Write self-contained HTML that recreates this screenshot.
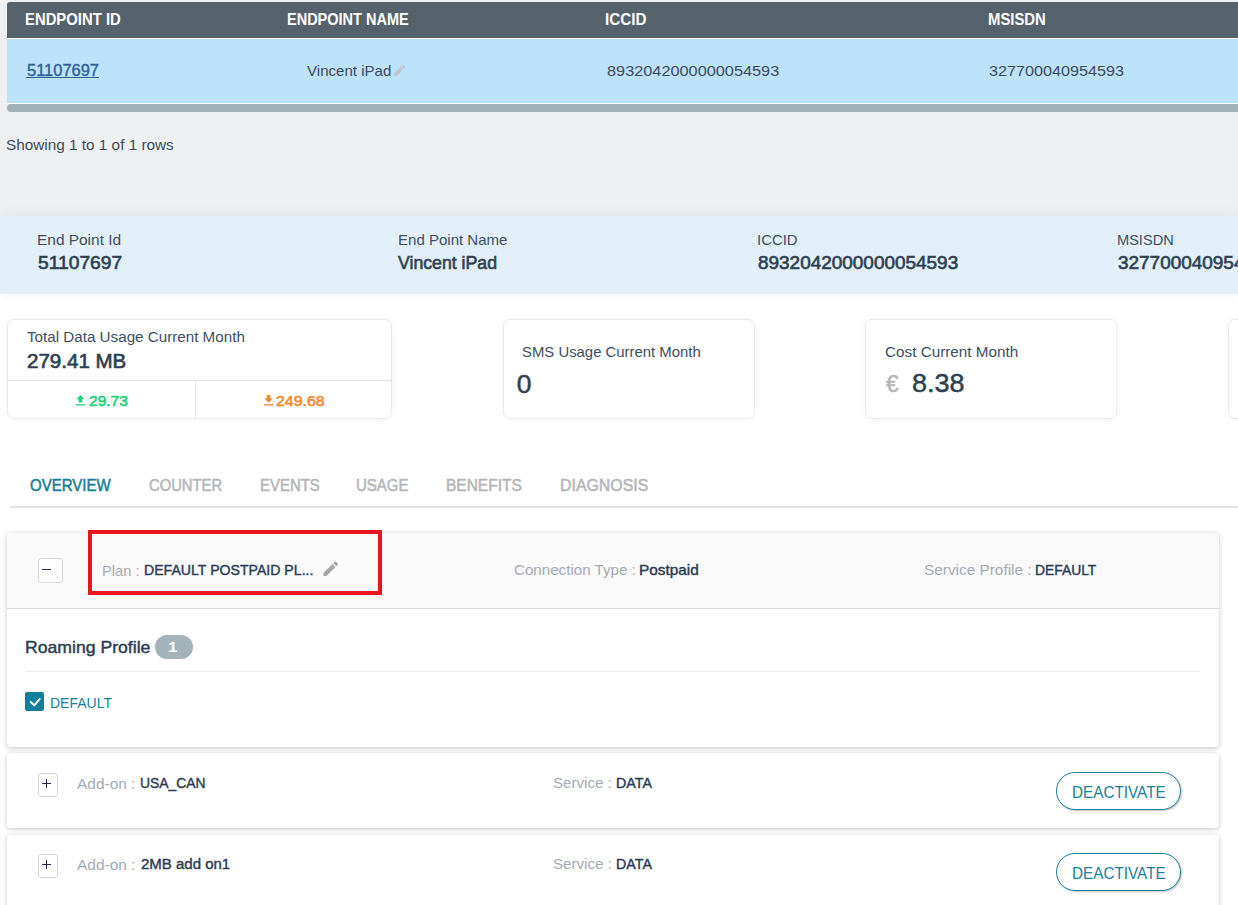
<!DOCTYPE html>
<html><head><meta charset="utf-8"><style>
html,body{margin:0;padding:0;width:1238px;height:905px;overflow:hidden;background:#fff;position:relative;font-family:"Liberation Sans", sans-serif;}
.t{position:absolute;line-height:1;white-space:nowrap;transform-origin:0 0;}
</style></head><body>
<div style="position:absolute;left:0px;top:0px;width:1238px;height:216px;background:#eff0f2"></div>
<div style="position:absolute;left:7px;top:2px;width:1231px;height:36px;background:#56626b;border-top-left-radius:3px"></div>
<div style="position:absolute;left:7px;top:38px;width:1231px;height:1px;background:#ffffff"></div>
<div style="position:absolute;left:7px;top:39px;width:1231px;height:64px;background:#bde3fb"></div>
<div style="position:absolute;left:7px;top:103px;width:1231px;height:1px;background:#ffffff"></div>
<div style="position:absolute;left:7px;top:104px;width:1231px;height:8px;background:#a2b1b8;border-radius:4px 0 0 4px"></div>
<div class="t" style="left:25.13px;top:11.00px;font-size:17px;font-weight:700;color:#ffffff;transform:scaleX(0.8741);">ENDPOINT ID</div>
<div class="t" style="left:287.15px;top:11.00px;font-size:17px;font-weight:700;color:#ffffff;transform:scaleX(0.8532);">ENDPOINT NAME</div>
<div class="t" style="left:605.30px;top:11.00px;font-size:17px;font-weight:700;color:#ffffff;transform:scaleX(0.8956);">ICCID</div>
<div class="t" style="left:987.73px;top:11.00px;font-size:17px;font-weight:700;color:#ffffff;transform:scaleX(0.8750);">MSISDN</div>
<div class="t" style="left:26.50px;top:63.00px;font-size:16px;font-weight:400;color:#2d5f96;transform:scaleX(1.0286);-webkit-text-stroke:0.35px #2d5f96">51107697</div>
<div style="position:absolute;left:26px;top:76.5px;width:73px;height:1.2px;background:#2d5f96"></div>
<div class="t" style="left:306.60px;top:64.00px;font-size:14.6px;font-weight:400;color:#3b4a5c;transform:scaleX(1.0333);">Vincent iPad</div>
<svg style="position:absolute;left:391.5px;top:62.5px" width="15" height="15" viewBox="0 0 24 24"><path fill="#bcc6ce" d="M3 17.25V21h3.75L17.81 9.94l-3.75-3.75L3 17.25zM20.71 7.04a1 1 0 0 0 0-1.41l-2.34-2.34a1 1 0 0 0-1.41 0l-1.83 1.83 3.75 3.75 1.83-1.83z"/></svg>
<div class="t" style="left:606.50px;top:63.00px;font-size:15px;font-weight:400;color:#3b4a5c;transform:scaleX(1.0867);">8932042000000054593</div>
<div class="t" style="left:988.60px;top:63.00px;font-size:15px;font-weight:400;color:#3b4a5c;transform:scaleX(1.0792);">327700040954593</div>
<div class="t" style="left:6.16px;top:138.00px;font-size:14.8px;font-weight:400;color:#3b4a5c;transform:scaleX(1.0354);">Showing 1 to 1 of 1 rows</div>
<div style="position:absolute;left:0px;top:216px;width:1238px;height:78px;background:#e3f0f9;box-shadow:0 0 14px rgba(0,0,0,0.06)"></div>
<div class="t" style="left:37.47px;top:232.00px;font-size:15px;font-weight:400;color:#3d4e62;transform:scaleX(1.0288);">End Point Id</div>
<div class="t" style="left:397.60px;top:232.00px;font-size:15px;font-weight:400;color:#3d4e62;transform:scaleX(1.0019);">End Point Name</div>
<div class="t" style="left:757.40px;top:232.00px;font-size:15px;font-weight:400;color:#3d4e62;transform:scaleX(0.9950);">ICCID</div>
<div class="t" style="left:1117.43px;top:232.00px;font-size:15px;font-weight:400;color:#3d4e62;transform:scaleX(0.9719);">MSISDN</div>
<div class="t" style="left:37.60px;top:255.00px;font-size:17.8px;font-weight:400;color:#2e3f52;transform:scaleX(1.0821);-webkit-text-stroke:0.6px #2e3f52">51107697</div>
<div class="t" style="left:397.80px;top:255.00px;font-size:17.8px;font-weight:400;color:#2e3f52;transform:scaleX(0.9949);-webkit-text-stroke:0.6px #2e3f52">Vincent iPad</div>
<div class="t" style="left:758.40px;top:255.00px;font-size:17.8px;font-weight:400;color:#2e3f52;transform:scaleX(1.0654);-webkit-text-stroke:0.6px #2e3f52">8932042000000054593</div>
<div class="t" style="left:1118.40px;top:255.00px;font-size:17.8px;font-weight:400;color:#2e3f52;transform:scaleX(1.0654);-webkit-text-stroke:0.6px #2e3f52">327700040954593</div>
<div style="position:absolute;left:7px;top:319px;width:385px;height:100px;background:#fff;border:1px solid #e8ecf0;border-radius:7px;box-sizing:border-box;box-shadow:0 0 10px rgba(0,0,0,0.045)"></div>
<div style="position:absolute;left:8px;top:380px;width:383px;height:1px;background:#e4e8ec"></div>
<div style="position:absolute;left:195px;top:381px;width:1px;height:37px;background:#e4e8ec"></div>
<div class="t" style="left:27.00px;top:330.00px;font-size:14px;font-weight:400;color:#3d4e62;transform:scaleX(1.0850);">Total Data Usage Current Month</div>
<div class="t" style="left:26.80px;top:351.00px;font-size:20px;font-weight:400;color:#2e3f52;transform:scaleX(1.0268);-webkit-text-stroke:0.65px #2e3f52">279.41 MB</div>
<svg style="position:absolute;left:76px;top:395px" width="9" height="11" viewBox="0 0 9 11"><path fill="#20d27a" d="M4.5 0L8.6 4.3H6.3V7.6H2.7V4.3H0.4z"/><rect x="0" y="9.2" width="9" height="1.3" fill="#20d27a"/></svg>
<div class="t" style="left:88.90px;top:393.00px;font-size:15px;font-weight:400;color:#20d27a;transform:scaleX(1.0342);-webkit-text-stroke:0.6px #20d27a">29.73</div>
<svg style="position:absolute;left:264px;top:395px" width="9" height="11" viewBox="0 0 9 11"><path fill="#f7892f" d="M2.7 0H6.3V3.6H8.6L4.5 7.8 0.4 3.6H2.7z"/><rect x="0" y="9.2" width="9" height="1.3" fill="#f7892f"/></svg>
<div class="t" style="left:276.00px;top:393.00px;font-size:15px;font-weight:400;color:#f7892f;transform:scaleX(1.0609);-webkit-text-stroke:0.6px #f7892f">249.68</div>
<div style="position:absolute;left:503px;top:319px;width:252px;height:100px;background:#fff;border:1px solid #e8ecf0;border-radius:7px;box-sizing:border-box;box-shadow:0 0 10px rgba(0,0,0,0.045)"></div>
<div class="t" style="left:521.81px;top:344.00px;font-size:15px;font-weight:400;color:#3d4e62;transform:scaleX(0.9922);">SMS Usage Current Month</div>
<div class="t" style="left:516.70px;top:371.00px;font-size:26.5px;font-weight:400;color:#2e3f52;transform:scaleX(1.0000);-webkit-text-stroke:0.5px #2e3f52">0</div>
<div style="position:absolute;left:865px;top:319px;width:252px;height:100px;background:#fff;border:1px solid #e8ecf0;border-radius:7px;box-sizing:border-box;box-shadow:0 0 10px rgba(0,0,0,0.045)"></div>
<div class="t" style="left:885.40px;top:344.00px;font-size:15px;font-weight:400;color:#3d4e62;transform:scaleX(1.0177);">Cost Current Month</div>
<div class="t" style="left:885.80px;top:372.00px;font-size:24px;font-weight:400;color:#b5b7b9;transform:scaleX(0.9429);-webkit-text-stroke:0.6px #b5b7b9">€</div>
<div class="t" style="left:911.66px;top:370.00px;font-size:26px;font-weight:400;color:#2e3f52;transform:scaleX(1.0367);-webkit-text-stroke:0.5px #2e3f52">8.38</div>
<div style="position:absolute;left:1228px;top:319px;width:30px;height:100px;background:#fff;border:1px solid #e8ecf0;border-radius:7px;box-sizing:border-box;box-shadow:0 0 10px rgba(0,0,0,0.045)"></div>
<div class="t" style="left:29.50px;top:478.00px;font-size:16.6px;font-weight:400;color:#1a7d98;transform:scaleX(0.9044);-webkit-text-stroke:0.55px #1a7d98">OVERVIEW</div>
<div class="t" style="left:148.70px;top:478.00px;font-size:16.6px;font-weight:400;color:#b4b6b8;transform:scaleX(0.8915);-webkit-text-stroke:0.55px #b4b6b8">COUNTER</div>
<div class="t" style="left:259.50px;top:478.00px;font-size:16.6px;font-weight:400;color:#b4b6b8;transform:scaleX(0.9015);-webkit-text-stroke:0.55px #b4b6b8">EVENTS</div>
<div class="t" style="left:356.30px;top:478.00px;font-size:16.6px;font-weight:400;color:#b4b6b8;transform:scaleX(0.9035);-webkit-text-stroke:0.55px #b4b6b8">USAGE</div>
<div class="t" style="left:446.37px;top:478.00px;font-size:16.6px;font-weight:400;color:#b4b6b8;transform:scaleX(0.9337);-webkit-text-stroke:0.55px #b4b6b8">BENEFITS</div>
<div class="t" style="left:559.64px;top:478.00px;font-size:16.6px;font-weight:400;color:#b4b6b8;transform:scaleX(0.9582);-webkit-text-stroke:0.55px #b4b6b8">DIAGNOSIS</div>
<div style="position:absolute;left:10px;top:506px;width:1228px;height:2px;background:#e4e5e7"></div>
<div style="position:absolute;left:7px;top:533px;width:1212px;height:214px;background:#fff;border-radius:4px;box-shadow:0 1px 5px rgba(0,0,0,0.24)"></div>
<div style="position:absolute;left:7px;top:533px;width:1212px;height:75px;background:#fafafa;border-radius:4px 4px 0 0"></div>
<div style="position:absolute;left:7px;top:608px;width:1212px;height:1px;background:#dcdcdc"></div>
<div style="position:absolute;left:38px;top:558px;width:25px;height:25px;border:1px solid #d6d6d6;border-radius:3px;box-sizing:border-box;background:#fff"></div>
<div style="position:absolute;left:42px;top:569px;width:9px;height:1.2px;background:#262f5e"></div>
<div class="t" style="left:101.82px;top:563.00px;font-size:15px;font-weight:400;color:#a3abb4;transform:scaleX(0.9784);">Plan :</div>
<div class="t" style="left:143.86px;top:562.00px;font-size:15px;font-weight:400;color:#2c3b52;transform:scaleX(0.9408);-webkit-text-stroke:0.42px #2c3b52">DEFAULT POSTPAID PL...</div>
<svg style="position:absolute;left:320.5px;top:558.5px" width="19.5" height="19.5" viewBox="0 0 24 24"><path fill="#a6a6a6" d="M3 17.25V21h3.75L17.81 9.94l-3.75-3.75L3 17.25zM20.71 7.04a1 1 0 0 0 0-1.41l-2.34-2.34a1 1 0 0 0-1.41 0l-1.83 1.83 3.75 3.75 1.83-1.83z"/></svg>
<div class="t" style="left:513.90px;top:562.00px;font-size:15px;font-weight:400;color:#a3abb4;transform:scaleX(1.0092);">Connection Type :</div>
<div class="t" style="left:639.38px;top:562.00px;font-size:15px;font-weight:400;color:#2c3b52;transform:scaleX(1.0228);-webkit-text-stroke:0.42px #2c3b52">Postpaid</div>
<div class="t" style="left:924.08px;top:562.00px;font-size:15px;font-weight:400;color:#a3abb4;transform:scaleX(1.0243);">Service Profile :</div>
<div class="t" style="left:1034.98px;top:562.00px;font-size:15px;font-weight:400;color:#2c3b52;transform:scaleX(0.9227);-webkit-text-stroke:0.42px #2c3b52">DEFAULT</div>
<div style="position:absolute;left:88px;top:530px;width:294px;height:65px;border:4px solid #e8151f;box-sizing:border-box"></div>
<div class="t" style="left:24.76px;top:639.00px;font-size:17px;font-weight:400;color:#2c3b52;transform:scaleX(1.0367);-webkit-text-stroke:0.42px #2c3b52">Roaming Profile</div>
<div style="position:absolute;left:155px;top:635px;width:38px;height:24px;background:#a4b2ba;border-radius:12px"></div>
<div class="t" style="left:167.86px;top:639.00px;font-size:15px;font-weight:700;color:#ffffff;transform:scaleX(1.1429);">1</div>
<div style="position:absolute;left:25px;top:671px;width:1175px;height:1px;background:#e8edf0"></div>
<div style="position:absolute;left:25px;top:692px;width:19px;height:19px;background:#127e9c;border-radius:2px"></div>
<svg style="position:absolute;left:25px;top:692px" width="19" height="19" viewBox="0 0 19 19"><path d="M5.2 9.4L9.3 13.4L15.2 6.3" stroke="#fff" stroke-width="2" fill="none"/></svg>
<div class="t" style="left:50.00px;top:696.00px;font-size:14px;font-weight:400;color:#1a7f9a;transform:scaleX(1.0000);">DEFAULT</div>
<div style="position:absolute;left:7px;top:753px;width:1212px;height:75px;background:#fff;border-radius:4px;box-shadow:0 1px 5px rgba(0,0,0,0.24)"></div>
<div style="position:absolute;left:38px;top:772.5px;width:20px;height:24.5px;border:1px solid #d6d6d6;border-radius:3px;box-sizing:border-box;background:#fff"></div>
<div style="position:absolute;left:42px;top:783px;width:9px;height:1px;background:#262a5a"></div>
<div style="position:absolute;left:46px;top:779px;width:1px;height:9px;background:#262a5a"></div>
<div class="t" style="left:77.20px;top:776.00px;font-size:15.5px;font-weight:400;color:#a3abb4;transform:scaleX(0.9966);">Add-on :</div>
<div class="t" style="left:139.81px;top:775.00px;font-size:15.5px;font-weight:400;color:#2c3b52;transform:scaleX(0.8944);-webkit-text-stroke:0.42px #2c3b52">USA_CAN</div>
<div class="t" style="left:553.26px;top:776.00px;font-size:14.5px;font-weight:400;color:#a3abb4;transform:scaleX(1.0418);">Service :</div>
<div class="t" style="left:615.62px;top:776.00px;font-size:14.5px;font-weight:400;color:#2c3b52;transform:scaleX(0.9833);-webkit-text-stroke:0.42px #2c3b52">DATA</div>
<div style="position:absolute;left:1056px;top:772px;width:125px;height:38px;border:1px solid #1a809c;border-radius:19px;box-sizing:border-box;background:#fff;box-shadow:1px 1px 2px rgba(0,0,0,0.25)"></div>
<div class="t" style="left:1071.56px;top:784.00px;font-size:16.3px;font-weight:400;color:#1a809c;transform:scaleX(0.9384);">DEACTIVATE</div>
<div style="position:absolute;left:7px;top:835px;width:1212px;height:120px;background:#fff;border-radius:4px;box-shadow:0 1px 5px rgba(0,0,0,0.24)"></div>
<div style="position:absolute;left:38px;top:853.5px;width:20px;height:24.5px;border:1px solid #d6d6d6;border-radius:3px;box-sizing:border-box;background:#fff"></div>
<div style="position:absolute;left:42px;top:864px;width:9px;height:1px;background:#262a5a"></div>
<div style="position:absolute;left:46px;top:860px;width:1px;height:9px;background:#262a5a"></div>
<div class="t" style="left:77.20px;top:857.00px;font-size:15.5px;font-weight:400;color:#a3abb4;transform:scaleX(0.9966);">Add-on :</div>
<div class="t" style="left:140.70px;top:856.00px;font-size:15.5px;font-weight:400;color:#2c3b52;transform:scaleX(0.9674);-webkit-text-stroke:0.42px #2c3b52">2MB add on1</div>
<div class="t" style="left:553.26px;top:857.00px;font-size:14.5px;font-weight:400;color:#a3abb4;transform:scaleX(1.0418);">Service :</div>
<div class="t" style="left:615.62px;top:857.00px;font-size:14.5px;font-weight:400;color:#2c3b52;transform:scaleX(0.9833);-webkit-text-stroke:0.42px #2c3b52">DATA</div>
<div style="position:absolute;left:1056px;top:853px;width:125px;height:38px;border:1px solid #1a809c;border-radius:19px;box-sizing:border-box;background:#fff;box-shadow:1px 1px 2px rgba(0,0,0,0.25)"></div>
<div class="t" style="left:1071.56px;top:865.00px;font-size:16.3px;font-weight:400;color:#1a809c;transform:scaleX(0.9384);">DEACTIVATE</div>
</body></html>
